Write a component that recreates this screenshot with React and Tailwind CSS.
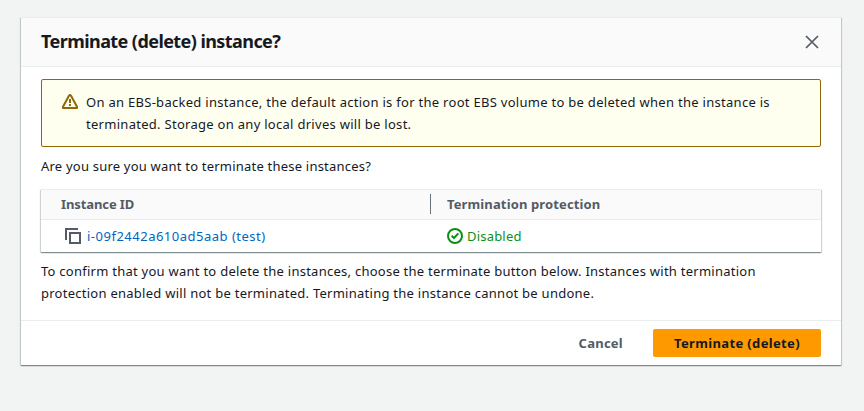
const CARD_SHADOW =
  "shadow-[0_1px_1px_0_rgba(0,28,36,0.3),1px_1px_1px_0_rgba(0,28,36,0.15),-1px_1px_1px_0_rgba(0,28,36,0.15)]";

function CloseIcon() {
  return (
    <svg className="h-4 w-4" viewBox="0 0 16 16" fill="none" stroke="#545b64" strokeWidth="1.7">
      <path d="M2 2l12 12M14 2L2 14" />
    </svg>
  );
}

function WarningIcon() {
  return (
    <svg className="h-4 w-4 shrink-0" viewBox="0 0 16 16" fill="none" stroke="#906806" strokeWidth="2" strokeLinejoin="round">
      <path d="M7.1 1.6Q8 .5 8.9 1.6L15 12.8V14H1V12.8L7.1 1.6z" />
      <path d="M8 5v4M8 10v2" />
    </svg>
  );
}

function CopyIcon() {
  return (
    <svg className="h-4 w-4 shrink-0" viewBox="0 0 16 16" fill="none" stroke="#545b64" strokeWidth="2">
      <path d="M5 5h10v10H5z" />
      <path d="M1 12V1h12" />
    </svg>
  );
}

function CheckIcon() {
  return (
    <svg className="h-4 w-4 shrink-0" viewBox="0 0 16 16" fill="none" stroke="#0b8f16" strokeWidth="2">
      <circle cx="8" cy="8" r="7" />
      <path d="M4.6 7.8l2.4 2.2L11.3 5.4" />
    </svg>
  );
}

export default function App() {
  return (
    <div className="h-[411px] w-[864px] bg-[#f2f3f3] pt-[17px] pl-[21px] font-['Noto_Sans',sans-serif] text-[13px] leading-[22px] text-[#16191f] whitespace-nowrap">
      <div className={`flex h-[348px] w-[820px] flex-col border-t border-[#eaeded] bg-white ${CARD_SHADOW}`}>
        <header className="flex h-[49px] shrink-0 items-center justify-between border-b border-[#eaeded] bg-[#fafafa] pr-[21px] pl-5">
          <h2 className="pb-0.5 text-[18px] font-bold tracking-[-0.57px]">Terminate (delete) instance?</h2>
          <button aria-label="Close">
            <CloseIcon />
          </button>
        </header>

        <main className="flex-1 px-5 pt-3">
          <div className="flex h-[68px] gap-2 rounded-[2px] border border-[#906806] bg-[#fffff0] pt-[11px] pl-5">
            <div className="pt-[3px]">
              <WarningIcon />
            </div>
            <div className="tracking-[0.285px]">
              <p>On an EBS-backed instance, the default action is for the root EBS volume to be deleted when the instance is</p>
              <p>terminated. Storage on any local drives will be lost.</p>
            </div>
          </div>

          <p className="mt-2 tracking-[0.21px]">Are you sure you want to terminate these instances?</p>

          <div className={`mt-3 border-t border-[#eaeded] bg-white ${CARD_SHADOW}`}>
            <div className="flex h-[30px] items-start border-b border-[#eaeded] bg-[#fafafa] pt-1 font-bold text-[#545b64]">
              <div className="flex h-5 w-[390px] items-center border-r border-[#687078] pl-5">
                <span className="tracking-[-0.1px]">Instance ID</span>
              </div>
              <span className="pl-4 leading-5 tracking-[0.13px]">Termination protection</span>
            </div>
            <div className="flex h-8 items-center">
              <div className="flex w-[390px] items-center gap-[6px] pl-6">
                <CopyIcon />
                <a className="tracking-[0.5px] text-[#0066c0]">i-09f2442a610ad5aab (test)</a>
              </div>
              <div className="flex items-center gap-1 pl-4 text-[#0b8f16]">
                <CheckIcon />
                <span className="tracking-[0.2px]">Disabled</span>
              </div>
            </div>
          </div>

          <p className="mt-2 tracking-[0.255px]">To confirm that you want to delete the instances, choose the terminate button below. Instances with termination</p>
          <p className="tracking-[0.26px]">protection enabled will not be terminated. Terminating the instance cannot be undone.</p>
        </main>

        <footer className="flex h-[45px] shrink-0 items-center justify-end border-t border-[#eaeded] pr-5 font-bold">
          <button className="mr-[30px] tracking-[0.25px] text-[#545b64]">Cancel</button>
          <button className="h-7 w-[168px] rounded-[2px] bg-[#ff9900] tracking-[0.35px]">Terminate (delete)</button>
        </footer>
      </div>
    </div>
  );
}
